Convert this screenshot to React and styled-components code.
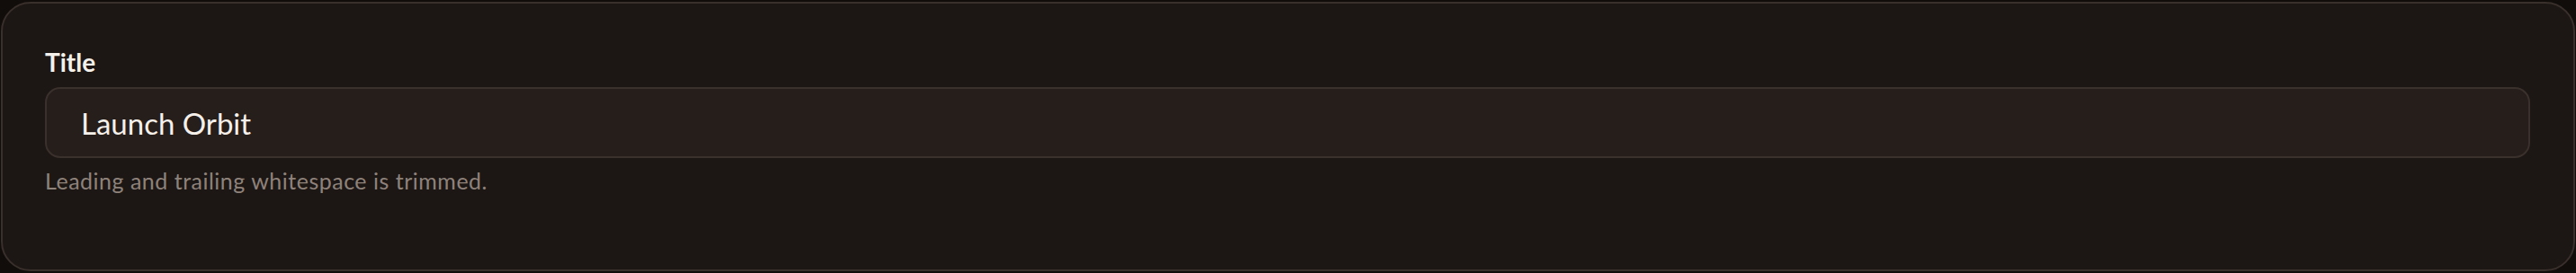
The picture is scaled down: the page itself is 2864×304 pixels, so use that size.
import styled, { createGlobalStyle } from "styled-components";

const GlobalStyle = createGlobalStyle`
  html, body {
    margin: 0;
    padding: 0;
    background: #110d0b;
  }
  body {
    font-family: "Lato", "Noto Sans", sans-serif;
  }
`;

const Page = styled.div`
  padding: 2px 1px 2px 1px;
`;

const Card = styled.section`
  background: #1c1714;
  border: 2px solid #392f2b;
  border-radius: 33px;
  padding: 47px 48px 83px 47px;
  display: flex;
  flex-direction: column;
`;

const Label = styled.label`
  font-size: 28px;
  line-height: 36px;
  font-weight: 700;
  color: #f6f0ea;
  margin-bottom: 10px;
`;

const Input = styled.input`
  box-sizing: border-box;
  width: 100%;
  height: 79px;
  padding: 0 38px;
  background: #261e1b;
  border: 2px solid #3a302c;
  border-radius: 17px;
  color: #f6f0ea;
  font-family: inherit;
  font-size: 33px;
  outline: none;
`;

const Hint = styled.p`
  margin: 9px 0 0 0;
  font-size: 25px;
  line-height: 32px;
  letter-spacing: 0.5px;
  color: #8e827b;
`;

export default function App() {
  return (
    <>
      <GlobalStyle />
      <Page>
        <Card>
          <Label htmlFor="title">Title</Label>
          <Input id="title" defaultValue="Launch Orbit" />
          <Hint>Leading and trailing whitespace is trimmed.</Hint>
        </Card>
      </Page>
    </>
  );
}
